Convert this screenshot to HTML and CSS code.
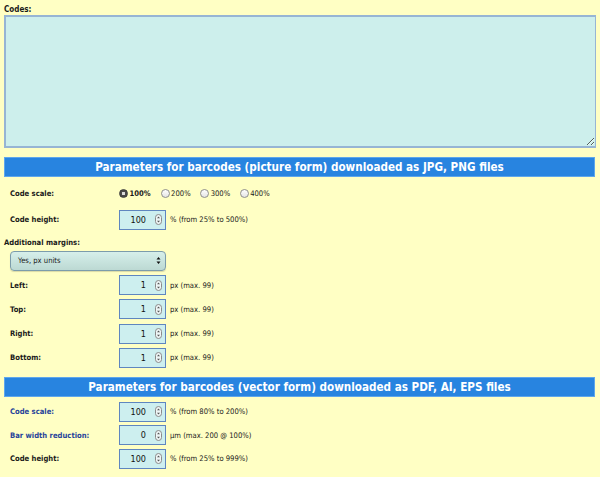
FILE: index.html
```html
<!DOCTYPE html>
<html>
<head>
<meta charset="utf-8">
<link rel="stylesheet" href="styles.css">
</head>
<body>
<div class="page">
  <div class="codes-label">Codes:</div>
  <textarea class="codes"></textarea>

  <div class="bar">Parameters for barcodes (picture form) downloaded as JPG, PNG files</div>

  <div class="rows">
    <div class="row row-radio">
      <div class="lbl">Code scale:</div>
      <div class="radios">
        <span class="radio checked"></span><span class="rtext sel">100%</span>
        <span class="radio"></span><span class="rtext">200%</span>
        <span class="radio"></span><span class="rtext">300%</span>
        <span class="radio"></span><span class="rtext">400%</span>
      </div>
    </div>
    <div class="row row-first">
      <div class="lbl">Code height:</div>
      <div class="num"><span class="val">100</span><svg class="spin" width="7" height="11" viewBox="0 0 7 11"><rect x="0.5" y="0.5" width="6" height="10" rx="3" fill="#eef6f6" stroke="#8a8a8a"/><path d="M2 4.2 L3.5 2.6 L5 4.2Z M2 6.8 L3.5 8.4 L5 6.8Z" fill="#555"/></svg></div>
      <div class="hint">% (from 25% to 500%)</div>
    </div>
  </div>

  <div class="sub-label">Additional margins:</div>
  <div class="rows rows-margin">
    <div class="select">Yes, px units<span class="sel-arrow"><svg width="5" height="9" viewBox="0 0 5 9"><path d="M0.5 3.5 L2.5 1 L4.5 3.5Z M0.5 5.5 L2.5 8 L4.5 5.5Z" fill="#111"/></svg></span></div>
    <div class="row">
      <div class="lbl">Left:</div>
      <div class="num"><span class="val">1</span><svg class="spin" width="7" height="11" viewBox="0 0 7 11"><rect x="0.5" y="0.5" width="6" height="10" rx="3" fill="#eef6f6" stroke="#8a8a8a"/><path d="M2 4.2 L3.5 2.6 L5 4.2Z M2 6.8 L3.5 8.4 L5 6.8Z" fill="#555"/></svg></div>
      <div class="hint">px (max. 99)</div>
    </div>
    <div class="row">
      <div class="lbl">Top:</div>
      <div class="num"><span class="val">1</span><svg class="spin" width="7" height="11" viewBox="0 0 7 11"><rect x="0.5" y="0.5" width="6" height="10" rx="3" fill="#eef6f6" stroke="#8a8a8a"/><path d="M2 4.2 L3.5 2.6 L5 4.2Z M2 6.8 L3.5 8.4 L5 6.8Z" fill="#555"/></svg></div>
      <div class="hint">px (max. 99)</div>
    </div>
    <div class="row">
      <div class="lbl">Right:</div>
      <div class="num"><span class="val">1</span><svg class="spin" width="7" height="11" viewBox="0 0 7 11"><rect x="0.5" y="0.5" width="6" height="10" rx="3" fill="#eef6f6" stroke="#8a8a8a"/><path d="M2 4.2 L3.5 2.6 L5 4.2Z M2 6.8 L3.5 8.4 L5 6.8Z" fill="#555"/></svg></div>
      <div class="hint">px (max. 99)</div>
    </div>
    <div class="row">
      <div class="lbl">Bottom:</div>
      <div class="num"><span class="val">1</span><svg class="spin" width="7" height="11" viewBox="0 0 7 11"><rect x="0.5" y="0.5" width="6" height="10" rx="3" fill="#eef6f6" stroke="#8a8a8a"/><path d="M2 4.2 L3.5 2.6 L5 4.2Z M2 6.8 L3.5 8.4 L5 6.8Z" fill="#555"/></svg></div>
      <div class="hint">px (max. 99)</div>
    </div>
  </div>

  <div class="bar bar2">Parameters for barcodes (vector form) downloaded as PDF, AI, EPS files</div>

  <div class="rows rows-vector">
    <div class="row">
      <div class="lbl blue">Code scale:</div>
      <div class="num"><span class="val">100</span><svg class="spin" width="7" height="11" viewBox="0 0 7 11"><rect x="0.5" y="0.5" width="6" height="10" rx="3" fill="#eef6f6" stroke="#8a8a8a"/><path d="M2 4.2 L3.5 2.6 L5 4.2Z M2 6.8 L3.5 8.4 L5 6.8Z" fill="#555"/></svg></div>
      <div class="hint">% (from 80% to 200%)</div>
    </div>
    <div class="row">
      <div class="lbl blue">Bar width reduction:</div>
      <div class="num"><span class="val">0</span><svg class="spin" width="7" height="11" viewBox="0 0 7 11"><rect x="0.5" y="0.5" width="6" height="10" rx="3" fill="#eef6f6" stroke="#8a8a8a"/><path d="M2 4.2 L3.5 2.6 L5 4.2Z M2 6.8 L3.5 8.4 L5 6.8Z" fill="#555"/></svg></div>
      <div class="hint">µm (max. 200 @ 100%)</div>
    </div>
    <div class="row">
      <div class="lbl">Code height:</div>
      <div class="num"><span class="val">100</span><svg class="spin" width="7" height="11" viewBox="0 0 7 11"><rect x="0.5" y="0.5" width="6" height="10" rx="3" fill="#eef6f6" stroke="#8a8a8a"/><path d="M2 4.2 L3.5 2.6 L5 4.2Z M2 6.8 L3.5 8.4 L5 6.8Z" fill="#555"/></svg></div>
      <div class="hint">% (from 25% to 999%)</div>
    </div>
  </div>
</div>
</body>
</html>
```

FILE: styles.css
```css
html, body {
  margin: 0;
  padding: 0;
  background: #ffffc4;
}
body {
  font-family: "DejaVu Sans Condensed", "DejaVu Sans", sans-serif;
  font-size: 7.6px;
  color: #1a1a1a;
  overflow: hidden;
}
.page {
  padding: 5px 4px 0 4px;
  width: 592px;
}
.codes-label {
  font-weight: bold;
  height: 10px;
  line-height: 10px;
  font-size: 8px;
}
.codes {
  display: block;
  box-sizing: border-box;
  width: 592px;
  height: 133px;
  margin: 0;
  background: #cdefec;
  border: 2px solid #97b5d4;
  border-right-width: 1px;
  border-bottom-width: 2px;
  outline: none;
  padding: 0;
}
.bar {
  box-sizing: border-box;
  width: 591px;
  height: 20px;
  margin-top: 9px;
  background: #2884e0;
  border: 1px solid #5ea6ec;
  color: #ffffff;
  font-weight: bold;
  font-size: 11.6px;
  line-height: 18px;
  text-align: center;
}
.bar2 {
  margin-top: 9px;
}
.rows {
  padding-left: 6px;
  display: flex;
  flex-direction: column;
  gap: 4.3px;
}
.row {
  display: flex;
  align-items: center;
  height: 20px;
}
.row-radio {
  margin-top: 6px;
}
.row-first {
  margin-top: 2.5px;
}
.lbl {
  width: 109px;
  flex: none;
  font-weight: bold;
}
.lbl.blue {
  color: #27449a;
}
.radios {
  display: flex;
  align-items: center;
}
.radio {
  box-sizing: border-box;
  width: 9px;
  height: 9px;
  border-radius: 50%;
  border: 1px solid #8e8e8e;
  background: linear-gradient(#ffffff, #e4e4e4);
  margin-right: 1.5px;
}
.radio.checked {
  border-color: #3a3a3a;
  background: radial-gradient(circle, #dcdcdc 0 1.4px, #4a4a4a 1.9px);
}
.rtext {
  margin-right: 9.5px;
}
.rtext.sel {
  font-weight: bold;
  margin-right: 10px;
}
.num {
  box-sizing: border-box;
  width: 47px;
  height: 20px;
  flex: none;
  background: #cdefef;
  border: 1px solid #5f86bf;
  display: flex;
  align-items: center;
  justify-content: flex-end;
  padding-right: 3px;
  font-size: 9px;
  color: #111;
}
.val {
  margin-right: 9px;
}
.spin {
  display: block;
}
.hint {
  margin-left: 4px;
}
.sub-label {
  font-weight: bold;
  margin-top: 8px;
  height: 10px;
  line-height: 10px;
}
.rows-margin {
  margin-top: 3px;
}
.select {
  box-sizing: border-box;
  width: 156px;
  height: 20px;
  border: 1px solid #7c9cab;
  border-radius: 4px;
  background: linear-gradient(#d6efea, #bcd9d3);
  display: flex;
  align-items: center;
  justify-content: space-between;
  padding: 0 4px 0 7px;
  box-shadow: 0 1px 1px rgba(0,0,0,0.15);
}
.sel-arrow {
  display: flex;
}
.rows-vector {
  margin-top: 5px;
  gap: 3.5px;
}
```
